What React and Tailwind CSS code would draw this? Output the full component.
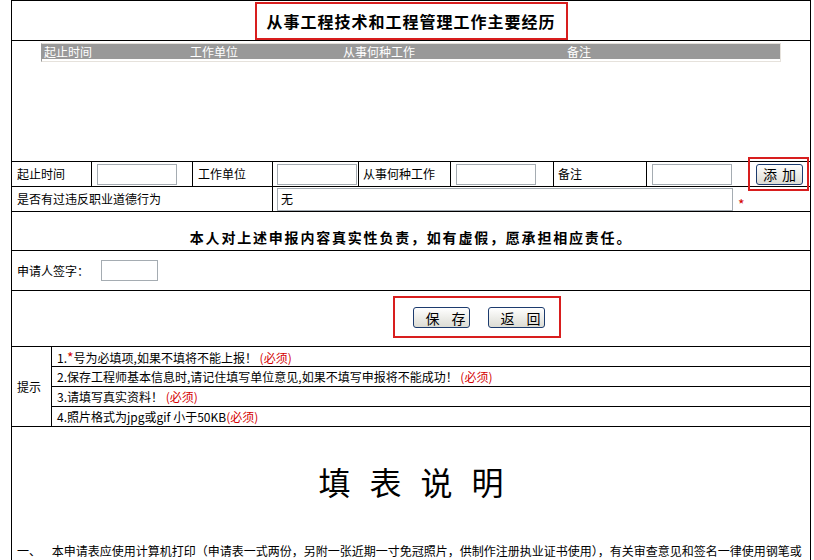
import React from "react";

const inputCls = "h-[21px] border border-[#a5acb2] bg-white";
const btnCls =
  "h-[21px] whitespace-nowrap rounded-[3px] border border-[#1c3b6e] bg-gradient-to-b from-white to-[#dcdcd4] text-[14px] leading-none text-black";

const Must = () => <span className="text-[#d40000]">(必须)</span>;

const tips = [
  <>
    1.<span className="text-[#d40000] text-[14px]">*</span>号为必填项,如果不填将不能上报！ <Must />
  </>,
  <>
    2.保存工程师基本信息时,请记住填写单位意见,如果不填写申报将不能成功！ <Must />
  </>,
  <>
    3.请填写真实资料！ <Must />
  </>,
  <>
    4.照片格式为jpg或gif 小于50KB<Must />
  </>,
];

export default function App() {
  return (
    <div className="w-[814px] h-[560px] overflow-hidden bg-white text-[12px] leading-none text-black font-['Noto_Sans_CJK_SC',sans-serif]">
      <div className="ml-[11px] w-[800px] border border-black">
        {/* title */}
        <div className="h-[40px] border-b border-black flex justify-center items-end">
          <div className="w-[313px] h-[38px] border-2 border-[#d81e1e] flex items-center justify-center">
            <span className="text-[16px] font-bold tracking-[1px]">从事工程技术和工程管理工作主要经历</span>
          </div>
        </div>

        {/* experience list */}
        <div className="h-[121px] border-b border-black pt-[2px]">
          <div className="mx-auto w-[740px] border border-[#e6e2dc] border-l-[#9a9a9a] pb-[2px]">
            <div className="h-[15px] bg-[#999999] text-white grid grid-cols-[148px_153px_224px_1fr] items-center">
              <span className="pl-[2px]">起止时间</span>
              <span>工作单位</span>
              <span>从事何种工作</span>
              <span>备注</span>
            </div>
          </div>
        </div>

        {/* add row */}
        <div className="h-[25px] border-b border-black flex">
          <div className="w-[80px] border-r border-black flex items-center pl-[5px]">起止时间</div>
          <div className="w-[101px] border-r border-black flex items-center pl-[5px]">
            <div className={`w-[80px] ${inputCls}`} />
          </div>
          <div className="w-[80px] border-r border-black flex items-center pl-[5px]">工作单位</div>
          <div className="w-[86px] border-r border-black flex items-center pl-[4px]">
            <div className={`w-[80px] ${inputCls}`} />
          </div>
          <div className="w-[92px] border-r border-black flex items-center pl-[4px]">从事何种工作</div>
          <div className="w-[103px] border-r border-black flex items-center pl-[5px]">
            <div className={`w-[80px] ${inputCls}`} />
          </div>
          <div className="w-[93px] border-r border-black flex items-center pl-[4px]">备注</div>
          <div className="relative flex-1 flex items-center pl-[5px]">
            <div className={`w-[80px] ${inputCls}`} />
            <button className={`ml-[24px] w-[47px] tracking-[5px] pl-[5px] ${btnCls}`}>添加</button>
            <div className="absolute left-[101px] top-[-5px] w-[61px] h-[34px] border-2 border-[#d81e1e]" />
          </div>
        </div>

        {/* ethics row */}
        <div className="h-[25px] border-b border-black flex">
          <div className="w-[261px] border-r border-black flex items-center pl-[5px]">是否有过违反职业道德行为</div>
          <div className="flex-1 flex items-center pl-[4px]">
            <div className="w-[456px] h-[23px] border border-[#a5acb2] flex items-center pl-[3px]">无</div>
            <span className="ml-[5px] mt-[10px] text-[#d40000] text-[14px]">*</span>
          </div>
        </div>

        {/* declaration */}
        <div className="h-[39px] border-b border-black flex items-end justify-center pb-[6px]">
          <span className="text-[14px] font-bold tracking-[1.8px]">本人对上述申报内容真实性负责，如有虚假，愿承担相应责任。</span>
        </div>

        {/* signature */}
        <div className="h-[40px] border-b border-black flex items-center pl-[5px]">
          <span>申请人签字：</span>
          <div className={`ml-[12px] w-[57px] ${inputCls}`} />
        </div>

        {/* save / back */}
        <div className="h-[56px] border-b border-black flex pl-[381px] pt-[5px]">
          <div className="w-[168px] h-[42px] border-2 border-[#d81e1e] flex items-center justify-center gap-[18px] pt-[1px] pl-[3px]">
            <button className={`w-[57px] tracking-[12px] pl-[12px] ${btnCls}`}>保存</button>
            <button className={`w-[57px] tracking-[12px] pl-[12px] ${btnCls}`}>返回</button>
          </div>
        </div>

        {/* tips */}
        <div className="border-b border-black flex">
          <div className="w-[40px] border-r border-black flex items-center pl-[5px]">提示</div>
          <div className="flex-1">
            {tips.map((t, i) => (
              <div
                key={i}
                className={`${i < 3 ? "h-[20px] border-b border-black" : "h-[19px]"} flex items-center pl-[5px]`}
              >
                <span>{t}</span>
              </div>
            ))}
          </div>
        </div>

        {/* instructions */}
        <div className="h-[200px] pt-[38px] px-[5px]">
          <div className="text-center text-[32px] tracking-[19px] pl-[19px]">填表说明</div>
          <p className="mt-[44px] leading-[20px]">
            一、&nbsp;&nbsp;&nbsp;&nbsp;本申请表应使用计算机打印（申请表一式两份，另附一张近期一寸免冠照片，供制作注册执业证书使用），有关审查意见和签名一律使用钢笔或毛笔签署，字迹要求工整清晰。
          </p>
        </div>
      </div>
    </div>
  );
}
